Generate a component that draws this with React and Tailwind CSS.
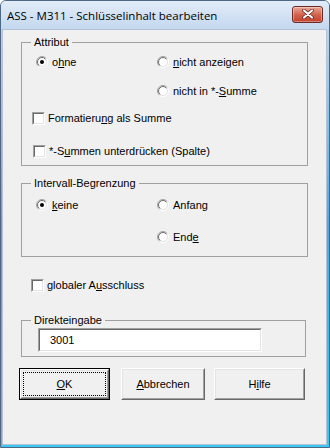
import React from 'react';

const Radio = ({ checked }) => (
    <svg width="12" height="12" viewBox="0 0 12 12" className="shrink-0">
        <defs>
            <linearGradient id="radioOuter" x1="0" y1="0" x2="1" y2="1">
                <stop offset="0.45" stopColor="#a0a0a0" />
                <stop offset="0.6" stopColor="#ffffff" />
            </linearGradient>
            <linearGradient id="radioInner" x1="0" y1="0" x2="1" y2="1">
                <stop offset="0.45" stopColor="#696969" />
                <stop offset="0.6" stopColor="#e3e3e3" />
            </linearGradient>
        </defs>
        <circle cx="6" cy="6" r="5.5" fill="none" stroke="url(#radioOuter)" />
        <circle cx="6" cy="6" r="4.5" fill="#ffffff" stroke="url(#radioInner)" />
        {checked && <circle cx="6" cy="6" r="2" fill="#000000" />}
    </svg>
);

const Check = () => (
    <span className="block shrink-0 w-[13px] h-[13px] border border-t-[#a0a0a0] border-l-[#a0a0a0] border-r-white border-b-white">
        <span className="block w-full h-full bg-white border border-t-[#696969] border-l-[#696969] border-r-[#e3e3e3] border-b-[#e3e3e3]" />
    </span>
);

const RadioOption = ({ checked, children, className = "" }) => (
    <div className={`h-[16px] flex items-center gap-[4px] ${className}`}>
        <Radio checked={checked} />
        <span>{children}</span>
    </div>
);

const CheckOption = ({ children, className = "" }) => (
    <div className={`h-[16px] flex items-center gap-[3px] ${className}`}>
        <Check />
        <span>{children}</span>
    </div>
);

const Button = ({ children, isDefault, className = "" }) => {
    if (isDefault) {
        return (
            <button className={`h-[32px] border border-black bg-[#f0f0f0] p-0 ${className}`}>
                <div className="h-full border border-t-white border-l-white border-r-[#696969] border-b-[#696969]">
                    <div className="h-full border border-t-[#e3e3e3] border-l-[#e3e3e3] border-r-[#a0a0a0] border-b-[#a0a0a0] p-[1px]">
                        <div className="h-full border border-dotted border-black flex items-center justify-center">
                            {children}
                        </div>
                    </div>
                </div>
            </button>
        );
    }
    return (
        <button className={`h-[32px] bg-[#f0f0f0] p-0 border border-t-white border-l-white border-r-[#696969] border-b-[#696969] ${className}`}>
            <div className="h-full border border-t-[#e3e3e3] border-l-[#e3e3e3] border-r-[#a0a0a0] border-b-[#a0a0a0] flex items-center justify-center">
                {children}
            </div>
        </button>
    );
};

export default function App() {
    return (
        <div className="w-[330px] h-[448px] flex flex-col border border-[#4d6885] rounded-t-[6px] bg-gradient-to-b from-[#c6daf0] via-[#4aa8e6] to-[#3cc6f0] font-['Liberation_Sans',Arial,sans-serif] text-[11px] text-black">
            {/* Title bar */}
            <div className="h-[28px] shrink-0 flex items-center justify-between pl-[6px] pr-[6px] rounded-t-[5px] bg-gradient-to-b from-[#e2ecf8] to-[#c4d8ef]">
                <span className="text-[11.5px] font-['Open_Sans',sans-serif] leading-none mt-[1px]">
                    ASS - M311 - Schlüsselinhalt bearbeiten
                </span>
                <div className="w-[31px] h-[17px] mb-[2px] rounded-[3px] border border-[#6b2a22] bg-gradient-to-b from-[#e9a896] via-[#d3654f] to-[#c2402c] flex items-center justify-center shadow-[inset_0_0_0_1px_rgba(255,255,255,0.35)]">
                    <svg width="12" height="10" viewBox="0 0 12 10">
                        <path d="M2 1.5 L10 8.5 M10 1.5 L2 8.5" stroke="#5a1d15" strokeWidth="3.6" strokeLinecap="round" />
                        <path d="M2 1.5 L10 8.5 M10 1.5 L2 8.5" stroke="#ffffff" strokeWidth="2.2" strokeLinecap="round" />
                    </svg>
                </div>
            </div>

            {/* Client area */}
            <div className="flex-1 ml-[1px] mr-[2px] mb-[2px] border border-[#b4c3d4] bg-[#f0f0f0] pl-[16px] pt-[6px]">
                {/* Attribut */}
                <fieldset className="ml-[2px] w-[287px] border border-[#a0a0a0] pb-[6px]">
                    <legend className="ml-[9px] px-[3px] leading-[13px]">Attribut</legend>
                    <div className="grid grid-cols-[121px_1fr] pl-[14px] mt-[5px]">
                        <RadioOption checked>o<u>h</u>ne</RadioOption>
                        <RadioOption><u>n</u>icht anzeigen</RadioOption>
                        <div />
                        <RadioOption className="mt-[13px]">nicht in *-<u>S</u>umme</RadioOption>
                    </div>
                    <CheckOption className="ml-[10px] mt-[11px]">Formatieru<u>n</u>g als Summe</CheckOption>
                    <CheckOption className="ml-[11px] mt-[17px]">*-S<u>u</u>mmen unterdrücken (Spalte)</CheckOption>
                </fieldset>

                {/* Intervall-Begrenzung */}
                <fieldset className="ml-[2px] mt-[11px] w-[287px] border border-[#a0a0a0] pb-[11px]">
                    <legend className="ml-[9px] px-[3px] leading-[13px]">Intervall-Begrenzung</legend>
                    <div className="grid grid-cols-[121px_1fr] pl-[14px] mt-[7px]">
                        <RadioOption checked><u>k</u>eine</RadioOption>
                        <RadioOption>Anfan<u>g</u></RadioOption>
                        <div />
                        <RadioOption className="mt-[16px]">End<u>e</u></RadioOption>
                    </div>
                </fieldset>

                <CheckOption className="ml-[12px] mt-[20px]">globaler A<u>u</u>sschluss</CheckOption>

                {/* Direkteingabe */}
                <fieldset className="ml-[2px] mt-[21px] w-[285px] border border-[#a0a0a0] pb-[4px]">
                    <legend className="ml-[9px] px-[3px] leading-[13px]">Direkteingabe</legend>
                    <div className="ml-[16px] mt-[1px] w-[224px] h-[24px] border border-t-[#a0a0a0] border-l-[#a0a0a0] border-r-white border-b-white">
                        <div className="h-full bg-white border border-t-[#696969] border-l-[#696969] border-r-[#e3e3e3] border-b-[#e3e3e3] flex items-center pl-[10px]">
                            3001
                        </div>
                    </div>
                </fieldset>

                {/* Buttons */}
                <div className="flex mt-[11px]">
                    <Button isDefault className="w-[91px]"><span><u>O</u>K</span></Button>
                    <Button className="w-[84px] ml-[11px]"><span><u>A</u>bbrechen</span></Button>
                    <Button className="w-[91px] ml-[9px]"><span>H<u>i</u>lfe</span></Button>
                </div>
            </div>
        </div>
    );
}
